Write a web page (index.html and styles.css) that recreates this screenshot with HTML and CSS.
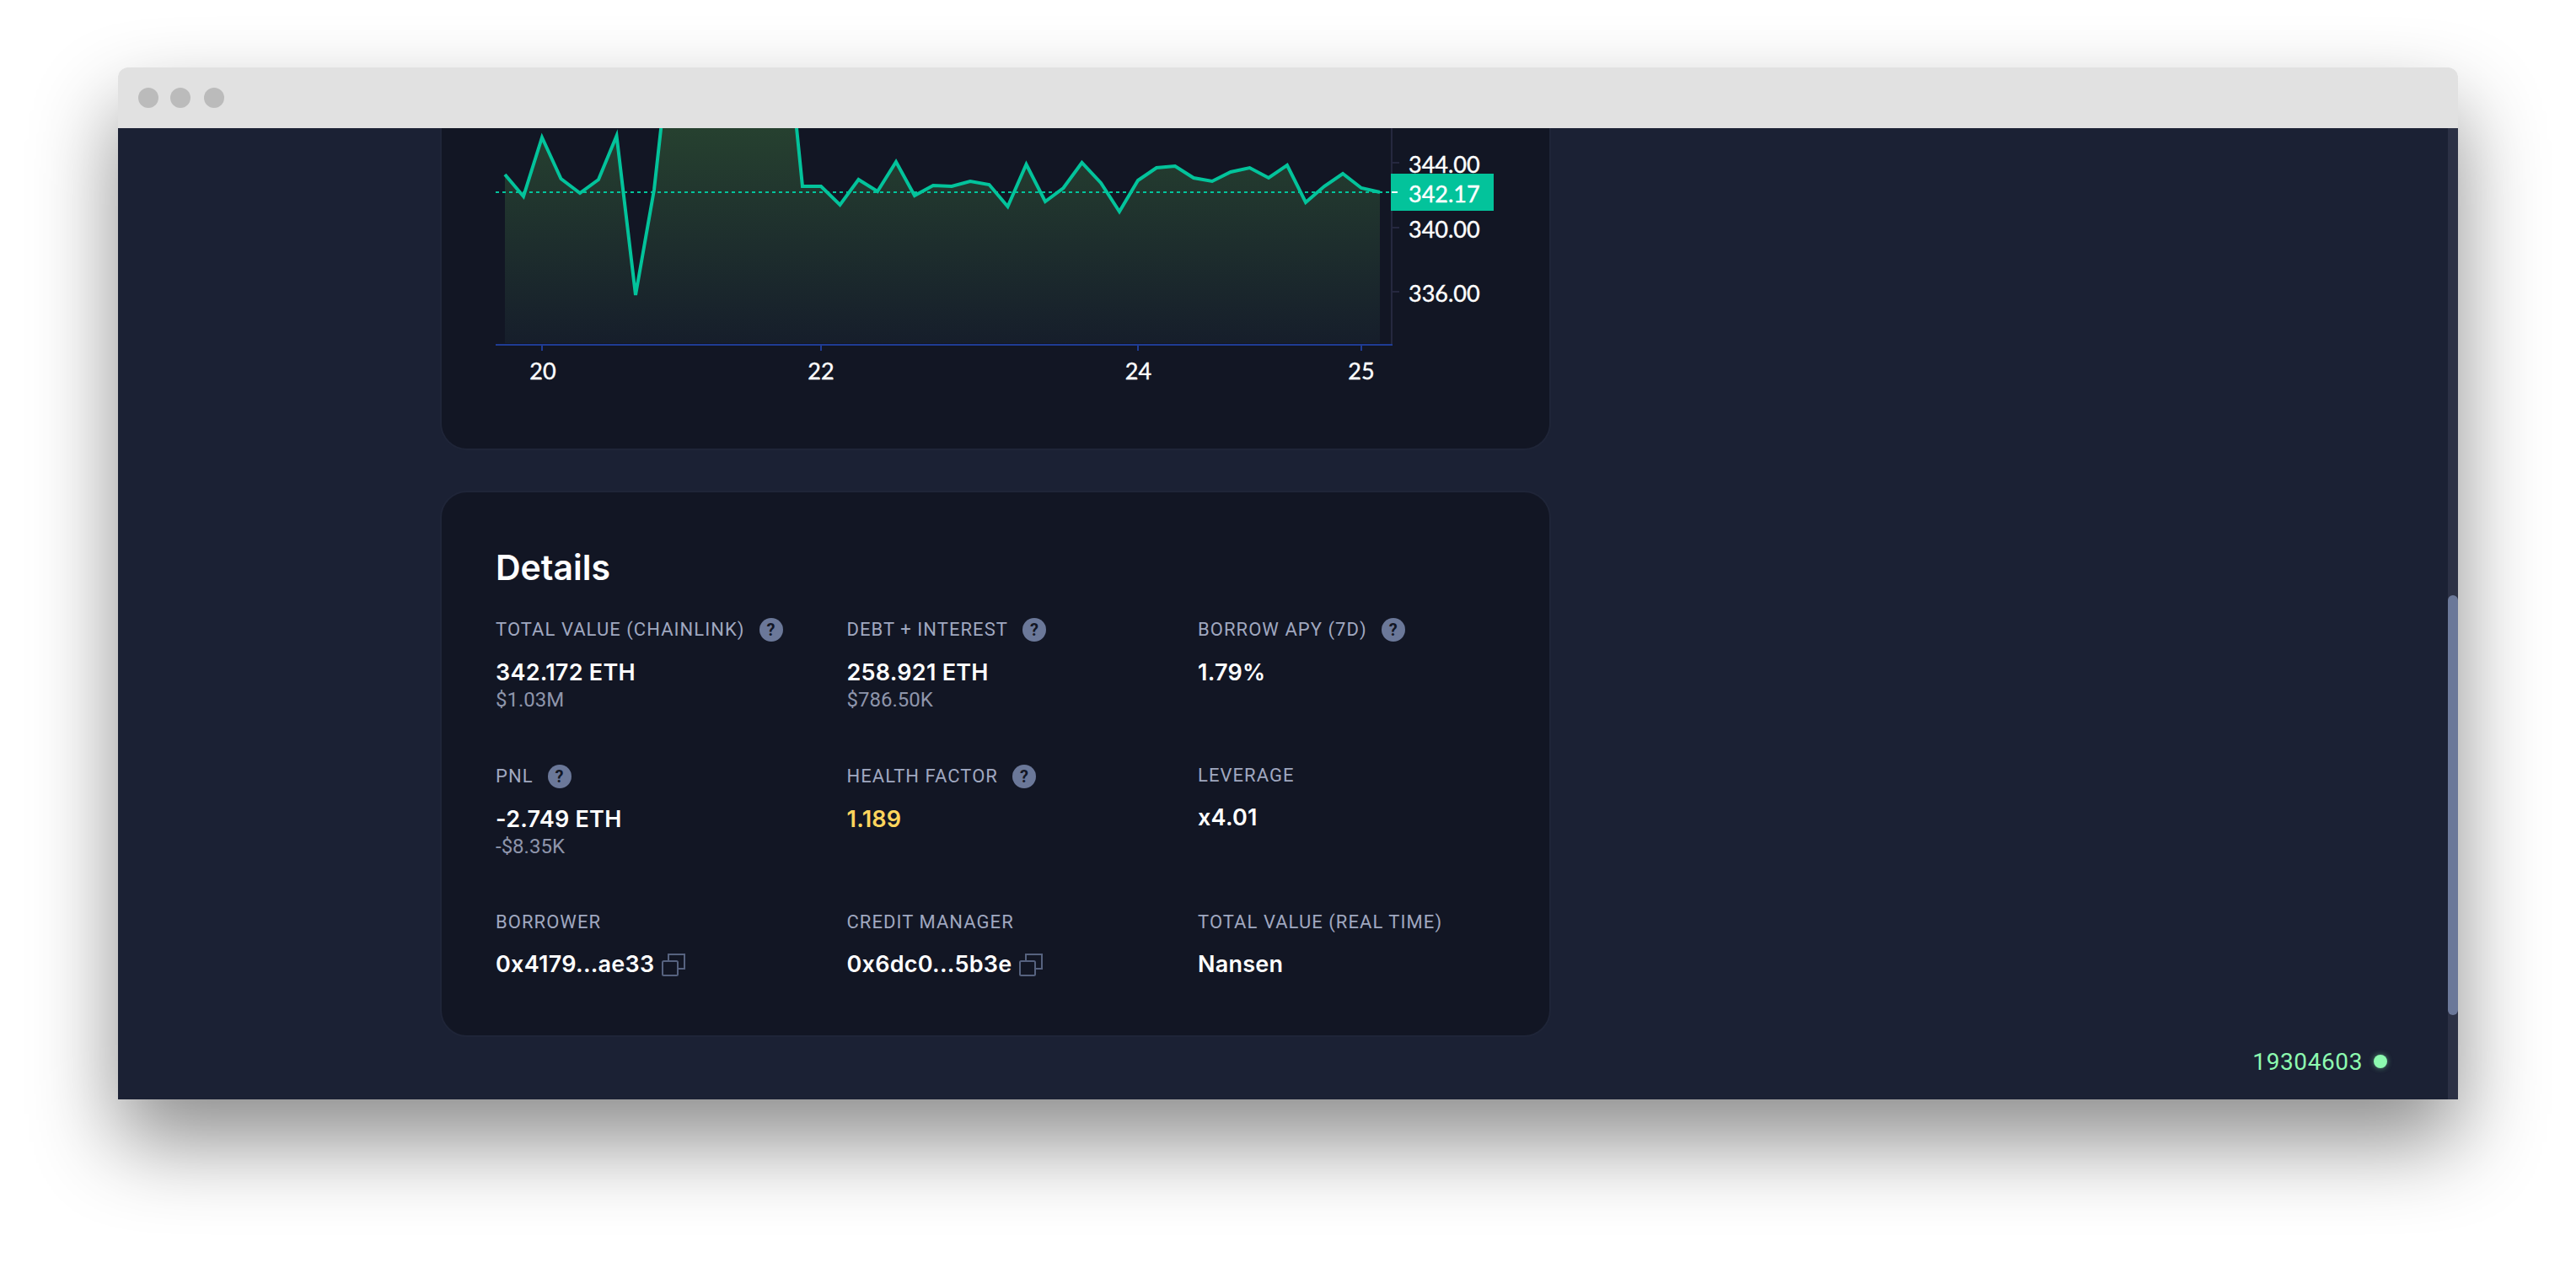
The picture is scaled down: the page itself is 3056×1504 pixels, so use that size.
FILE: index.html
```html
<!doctype html>
<html>
<head>
<meta charset="utf-8">
<link rel="stylesheet" href="styles.css">
<title>Credit account</title>
</head>
<body>
<div class="window">
  <div class="titlebar">
    <span class="light"></span>
    <span class="light"></span>
    <span class="light light-last"></span>
  </div>
  <div class="viewport">
    <main class="content">
      <section class="card card-chart">
        <svg class="chart" width="1314" height="380" viewBox="524 152 1314 380">
          <defs>
            <linearGradient id="areaFill" gradientUnits="userSpaceOnUse" x1="0" y1="120" x2="0" y2="407">
              <stop offset="0" stop-color="#284530"/>
              <stop offset="1" stop-color="#161e2b"/>
            </linearGradient>
          </defs>
          <polygon fill="url(#areaFill)" points="599,407 599,207 621,233 643,163 665.5,212 688,229 710,213 731.5,161 754,350 776,225 798,28 930,3 952,221 974,221 996.5,243 1018.5,213 1041,227 1063,192 1085,232 1107,220 1129,221 1151,215 1173.5,219 1195.5,245 1217.5,195 1240,239 1261.5,223 1283.5,193 1306,217 1328,251 1350,214 1372,199 1394,197 1416,211 1438,215 1460,204 1482.5,199 1505,211 1527,196 1549,240 1571,221 1593,206 1615,223 1637,228 1637,407"/>
          <path class="axis-y" d="M1651 152V409M1652 193H1660M1652 270H1660M1652 346H1660"/>
          <path class="axis-x" d="M588 409H1652M643 409V416M974 409V416M1350 409V416M1615 409V416"/>
          <path class="price-dash" d="M588 228H1652"/>
          <polyline class="price-line" points="599,207 621,233 643,163 665.5,212 688,229 710,213 731.5,161 754,350 776,225 798,28 930,3 952,221 974,221 996.5,243 1018.5,213 1041,227 1063,192 1085,232 1107,220 1129,221 1151,215 1173.5,219 1195.5,245 1217.5,195 1240,239 1261.5,223 1283.5,193 1306,217 1328,251 1350,214 1372,199 1394,197 1416,211 1438,215 1460,204 1482.5,199 1505,211 1527,196 1549,240 1571,221 1593,206 1615,223 1637,228"/>
          <text class="tick" x="1671" y="205">344.00</text>
          <text class="tick" x="1671" y="282">340.00</text>
          <text class="tick" x="1671" y="358">336.00</text>
          <rect class="price-tag" x="1650" y="206" width="122" height="44"/>
          <path class="price-notch" d="M1651 228H1658"/>
          <text class="tick" x="1671" y="240">342.17</text>
          <text class="tick tick-x" x="644" y="450">20</text>
          <text class="tick tick-x" x="974" y="450">22</text>
          <text class="tick tick-x" x="1350.5" y="450">24</text>
          <text class="tick tick-x" x="1615" y="450">25</text>
        </svg>
      </section>

      <section class="card card-details">
        <h2 class="details-title">Details</h2>
        <div class="details-grid">
          <div class="stat">
            <div class="stat-label">TOTAL VALUE (CHAINLINK)<span class="help">?</span></div>
            <div class="stat-value">342.172 ETH</div>
            <div class="stat-sub">$1.03M</div>
          </div>
          <div class="stat">
            <div class="stat-label">DEBT + INTEREST<span class="help">?</span></div>
            <div class="stat-value">258.921 ETH</div>
            <div class="stat-sub">$786.50K</div>
          </div>
          <div class="stat">
            <div class="stat-label">BORROW APY (7D)<span class="help">?</span></div>
            <div class="stat-value">1.79%</div>
          </div>
          <div class="stat">
            <div class="stat-label">PNL<span class="help">?</span></div>
            <div class="stat-value">-2.749 ETH</div>
            <div class="stat-sub">-$8.35K</div>
          </div>
          <div class="stat">
            <div class="stat-label">HEALTH FACTOR<span class="help">?</span></div>
            <div class="stat-value stat-warn">1.189</div>
          </div>
          <div class="stat">
            <div class="stat-label">LEVERAGE</div>
            <div class="stat-value">x4.01</div>
          </div>
          <div class="stat">
            <div class="stat-label">BORROWER</div>
            <div class="stat-value">0x4179...ae33
              <svg class="copy" width="28" height="28" viewBox="0 0 28 28"><rect x="1" y="10" width="18" height="17" rx="1.5"/><path d="M8 10V2H27V19H19"/></svg>
            </div>
          </div>
          <div class="stat">
            <div class="stat-label">CREDIT MANAGER</div>
            <div class="stat-value">0x6dc0...5b3e
              <svg class="copy" width="28" height="28" viewBox="0 0 28 28"><rect x="1" y="10" width="18" height="17" rx="1.5"/><path d="M8 10V2H27V19H19"/></svg>
            </div>
          </div>
          <div class="stat">
            <div class="stat-label">TOTAL VALUE (REAL TIME)</div>
            <div class="stat-value">Nansen</div>
          </div>
        </div>
      </section>

      <footer class="block-status">
        <span class="block-number">19304603</span>
        <span class="block-dot"></span>
      </footer>
    </main>
    <div class="scrollbar"><div class="scroll-thumb"></div></div>
  </div>
</div>
</body>
</html>
```

FILE: styles.css
```css
* {
    box-sizing: border-box;
}
html,
body {
    margin: 0;
    height: 100%;
    background-color: white;
}
body {
    padding: 80px 140px 200px;
    font-family: Roboto, "Liberation Sans", sans-serif;
    overflow: hidden;
}
.window {
    height: 1224px;
    display: flex;
    flex-direction: column;
    border-radius: 12px 12px 0 0;
    box-shadow: 0 50px 100px rgba(0, 0, 0, 0.45);
}
.titlebar {
    height: 72px;
    display: flex;
    align-items: center;
    gap: 14px;
    padding-left: 24px;
    background-color: #e1e1e1;
    border-radius: 12px 12px 0 0;
}
.light {
    width: 24px;
    height: 24px;
    border-radius: 50%;
    background-color: #bbb;
}
.light-last {
    margin-left: 2px;
}
.viewport {
    flex: 1;
    display: flex;
    min-height: 0;
    background-color: #1b2134;
}
.content {
    flex: 1;
    padding-left: 382px;
}
.scrollbar {
    position: relative;
    width: 12px;
    background-color: #2c3145;
}
.scroll-thumb {
    position: absolute;
    top: 554px;
    left: 0;
    right: 0;
    height: 498px;
    border-radius: 12px;
    background-color: #6b7899;
}

.card {
    width: 1318px;
    background-color: #121624;
    border: 2px solid #1f2538;
    border-radius: 32px;
}
.card-chart {
    height: 382px;
    border-top: 0;
    border-radius: 0 0 32px 32px;
    overflow: hidden;
}
.chart {
    display: block;
}
.axis-y {
    fill: none;
    stroke: #25283f;
    stroke-width: 2;
}
.axis-x {
    fill: none;
    stroke: #1f3c94;
    stroke-width: 2;
}
.price-dash {
    fill: none;
    stroke: #03c39b;
    stroke-width: 2;
    stroke-dasharray: 4 4;
}
.price-line {
    fill: none;
    stroke: #03c39b;
    stroke-width: 4;
    stroke-linejoin: miter;
}
.price-tag {
    fill: #03c39b;
}
.price-notch {
    stroke: white;
    stroke-width: 2;
}
.tick {
    fill: white;
    stroke: white;
    stroke-width: 0.4px;
    font-family: Lato, sans-serif;
    font-size: 27px;
}
.tick-x {
    text-anchor: middle;
}

.card-details {
    height: 648px;
    margin-top: 48px;
    padding: 62px 64px 0;
}
.details-title {
    margin: 0;
    height: 87px;
    color: white;
    font-family: Inter, Roboto, sans-serif;
    font-size: 41px;
    line-height: 54px;
    font-weight: 600;
}
.details-grid {
    display: grid;
    grid-template-columns: repeat(3, 416.5px);
    grid-auto-rows: 174px;
}
.stat-label {
    display: flex;
    align-items: center;
    min-height: 26px;
    color: #a0a8c0;
    font-size: 22px;
    line-height: 26px;
    letter-spacing: 1.05px;
}
.help {
    flex: none;
    width: 28px;
    height: 28px;
    margin-left: 17px;
    border-radius: 50%;
    background-color: #6b7899;
    color: #121624;
    font-size: 20px;
    font-weight: 700;
    line-height: 28px;
    letter-spacing: 0;
    text-align: center;
}
.stat-value {
    display: flex;
    align-items: center;
    gap: 9px;
    height: 36px;
    margin-top: 19px;
    color: white;
    font-family: Inter, Roboto, sans-serif;
    font-size: 27px;
    line-height: 36px;
    font-weight: 600;
    letter-spacing: 0.25px;
}
.stat-warn {
    color: #ffd55d;
}
.stat-sub {
    margin-top: -2px;
    color: #8e95ab;
    font-size: 24px;
    line-height: 32px;
    font-weight: 400;
}
.copy {
    flex: none;
    fill: none;
    stroke: #56627f;
    stroke-width: 2;
}

.block-status {
    display: flex;
    justify-content: flex-end;
    align-items: center;
    gap: 13px;
    height: 28px;
    margin-top: 15px;
    padding-right: 72px;
}
.block-number {
    color: #8dfbb0;
    font-size: 28px;
    font-weight: 400;
    letter-spacing: 0.6px;
}
.block-dot {
    width: 16px;
    height: 16px;
    border-radius: 50%;
    background-color: #8dfbb0;
    box-shadow: 0 0 6px rgba(141, 251, 176, 0.5);
}
```
